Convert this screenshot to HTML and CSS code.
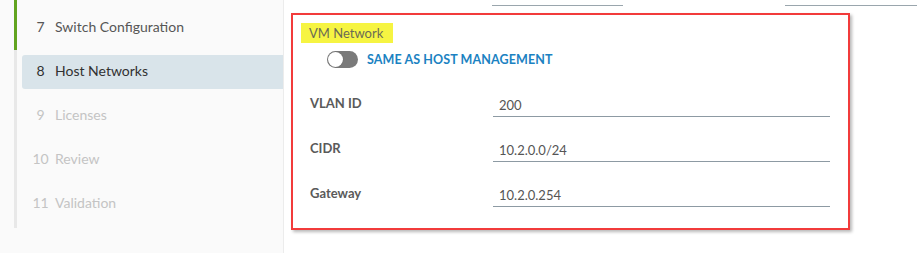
FILE: index.html
```html
<!DOCTYPE html>
<html>
<head>
<meta charset="utf-8">
<link rel="stylesheet" href="styles.css">
</head>
<body>
<div class="page">
  <aside class="sidebar">
    <div class="rail">
      <div class="rail-done"></div>
      <div class="rail-rest"></div>
    </div>
    <nav class="steps">
      <div class="step done"><span class="num">7</span><span class="name">Switch Configuration</span></div>
      <div class="step active"><span class="num">8</span><span class="name">Host Networks</span></div>
      <div class="step todo"><span class="num">9</span><span class="name">Licenses</span></div>
      <div class="step todo"><span class="num">10</span><span class="name">Review</span></div>
      <div class="step todo"><span class="num">11</span><span class="name">Validation</span></div>
    </nav>
  </aside>
  <main class="main">
    <div class="prev-lines">
      <div class="prev-line a"></div>
      <div class="prev-line b"></div>
    </div>
    <section class="card">
      <div class="title"><span class="hl">VM Network</span></div>
      <div class="toggle-row">
        <span class="toggle"><span class="knob"></span></span>
        <span class="toggle-label">SAME AS HOST MANAGEMENT</span>
      </div>
      <div class="fields">
        <div class="field"><label>VLAN ID</label><div class="input">200</div></div>
        <div class="field"><label>CIDR</label><div class="input">10.2.0.0/24</div></div>
        <div class="field"><label>Gateway</label><div class="input">10.2.0.254</div></div>
      </div>
    </section>
  </main>
</div>
</body>
</html>
```

FILE: styles.css
```css
html, body {
  margin: 0;
  padding: 0;
  background: #ffffff;
  font-family: Lato, "Open Sans", "Liberation Sans", sans-serif;
}
.page {
  display: flex;
  width: 923px;
  height: 253px;
  overflow: hidden;
}
.sidebar {
  width: 283px;
  flex: none;
  background: #fafafa;
  border-right: 1px solid #ececec;
  display: flex;
}
.rail {
  margin-left: 14px;
  width: 3px;
  display: flex;
  flex-direction: column;
  height: 228px;
}
.rail-done {
  height: 50px;
  background: #62a420;
}
.rail-rest {
  flex: 1;
  background: #e8e8e8;
}
.steps {
  margin-left: 5px;
  padding-top: 11px;
  flex: 1;
  display: flex;
  flex-direction: column;
  gap: 10px;
}
.step {
  height: 34px;
  display: flex;
  align-items: center;
  font-size: 14px;
  line-height: 16px;
  padding-bottom: 2px;
  box-sizing: border-box;
  border-radius: 3px 0 0 3px;
}
.step .num {
  margin-left: 8px;
  width: 21px;
  text-align: center;
  flex: none;
}
.step .name {
  padding-left: 4px;
}
.step.done { color: #565656; }
.step.active {
  background: #d9e4ea;
  color: #313131;
}
.step.todo { color: #c4c4c4; }
.main {
  flex: 1;
}
.prev-lines {
  display: flex;
  height: 6px;
}
.prev-line {
  height: 1px;
  background: #9aa6ad;
  margin-top: 5px;
}
.prev-line.a { margin-left: 208px; width: 131px; }
.prev-line.b { margin-left: 162px; width: 132px; }
.card {
  margin-left: 7px;
  margin-top: 7px;
  width: 555px;
  height: 213px;
  border: 2px solid #f23b3b;
  box-shadow: 2px 2px 3px rgba(0, 0, 0, 0.28);
  background: #ffffff;
}
.title {
  padding: 8px 0 0 8px;
  height: 20px;
  display: flex;
}
.hl {
  background: #f6f442;
  color: #6b6b55;
  font-size: 13px;
  line-height: 20px;
  padding: 0 3px 0 8px;
  width: 81px;
}
.toggle-row {
  display: flex;
  align-items: center;
  margin-top: 8px;
  margin-left: 34px;
  height: 17px;
}
.toggle {
  width: 31px;
  height: 17px;
  border-radius: 9px;
  background: #7a7a7a;
  display: flex;
  align-items: center;
  padding: 1px;
  box-sizing: border-box;
}
.knob {
  width: 15px;
  height: 15px;
  border-radius: 50%;
  background: #ffffff;
  box-shadow: 0 0 1px rgba(0,0,0,0.4);
}
.toggle-label {
  margin-left: 9px;
  color: #1b82c2;
  font-weight: 700;
  font-size: 12.5px;
  letter-spacing: 0.1px;
}
.fields {
  margin-top: 15px;
  display: flex;
  flex-direction: column;
  gap: 11px;
}
.field {
  display: flex;
  height: 34px;
  margin-left: 17px;
}
label {
  width: 183px;
  flex: none;
  font-size: 13px;
  font-weight: 700;
  color: #5a5a5a;
  padding-top: 12px;
}
.input {
  width: 337px;
  height: 34px;
  border-bottom: 1px solid #8d9aa3;
  font-size: 13px;
  color: #555;
  padding-left: 6px;
  box-sizing: border-box;
  padding-top: 14px;
}
```
